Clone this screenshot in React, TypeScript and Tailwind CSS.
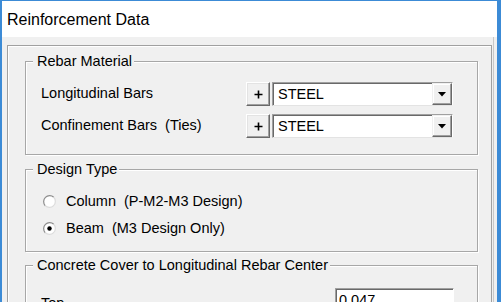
import React from "react"

const ui = "font-['Liberation_Sans',Arial,sans-serif] text-[14.5px] text-black"

function PlusButton() {
  return (
    <div className="w-[24px] h-[24px] flex items-center justify-center bg-[#f0f0f0] border border-t-white border-l-white border-r-[#696969] border-b-[#696969] shadow-[inset_-1px_-1px_0_#a0a0a0,inset_1px_1px_0_#e3e3e3]">
      <svg width="9" height="9" viewBox="0 0 9 9">
        <path d="M4.5 0.5v8M0.5 4.5h8" stroke="#000" strokeWidth="1.6" />
      </svg>
    </div>
  )
}

function Combo({ value }: { value: string }) {
  return (
    <div className="w-[181px] h-[24px] flex bg-white border border-t-[#a0a0a0] border-l-[#a0a0a0] border-r-white border-b-[#e3e3e3] shadow-[inset_1px_1px_0_#696969]">
      <span className="flex-1 pl-[5px] pt-[1px] leading-[21px]">{value}</span>
      <div className="w-[20px] h-full flex items-center justify-center bg-[#f0f0f0] border border-t-[#f0f0f0] border-l-[#f0f0f0] border-r-[#696969] border-b-[#696969] shadow-[inset_-1px_-1px_0_#a0a0a0,inset_1px_1px_0_#fff]">
        <svg width="8" height="5" viewBox="0 0 8 5">
          <path d="M0 0h8L4 4.5z" fill="#000" />
        </svg>
      </div>
    </div>
  )
}

function Radio({ label, checked }: { label: string; checked?: boolean }) {
  return (
    <div className="h-[20px] flex items-center pl-[17px]">
      <svg width="13" height="13" viewBox="0 0 13 13" className="shrink-0">
        <circle cx="6.5" cy="6.5" r="6" fill="#fff" />
        <path d="M2.26 10.74A6 6 0 0 1 10.74 2.26" fill="none" stroke="#8c8c8c" strokeWidth="1.2" />
        <path d="M10.74 2.26A6 6 0 0 1 2.26 10.74" fill="none" stroke="#dcdcdc" strokeWidth="1.2" />
        {checked && <circle cx="6.5" cy="6.5" r="2.2" fill="#000" />}
      </svg>
      <span className="ml-[10px] whitespace-pre leading-[18px]">{label}</span>
    </div>
  )
}

function Group({ title, className, children }: { title: string; className: string; children: React.ReactNode }) {
  return (
    <fieldset className={`ml-[17px] w-[453px] border border-[#a7a7a7] shadow-[inset_1px_1px_0_#fff,1px_1px_0_#fff] ${className}`}>
      <legend className="ml-[7px] pl-[4px] pr-[2px] leading-[16px] bg-[#f0f0f0]">{title}</legend>
      {children}
    </fieldset>
  )
}

export default function App() {
  return (
    <div className={`w-[501px] h-[302px] overflow-hidden flex flex-col border-l-2 border-r-4 border-t border-[#3c8bd6] ${ui}`}>
      {/* Title bar */}
      <div className="h-[36px] shrink-0 bg-white pl-[5px] pt-[9px]">
        <span className="text-[16px] leading-[18px]">Reinforcement Data</span>
      </div>

      <div className="flex-1 flex bg-[#f0f0f0]">
        <div className="flex-1 mr-[3px] border-r border-[#c8c8c8] flex flex-col">
          <div className="flex-1 ml-[5px] mt-[8px] mr-[1px] border-l border-t border-r border-[#a0a0a0] shadow-[inset_1px_1px_0_#fff]">
            {/* Rebar Material */}
            <Group title="Rebar Material" className="mt-[7px] pt-[13px] pb-[16px]">
              <div className="flex flex-col gap-[8px]">
                <div className="flex items-center pl-[15px]">
                  <span className="w-[205px]">Longitudinal Bars</span>
                  <PlusButton />
                  <div className="ml-[2px]">
                    <Combo value="STEEL" />
                  </div>
                </div>
                <div className="flex items-center pl-[15px]">
                  <span className="w-[205px] whitespace-pre">Confinement Bars  (Ties)</span>
                  <PlusButton />
                  <div className="ml-[2px]">
                    <Combo value="STEEL" />
                  </div>
                </div>
              </div>
            </Group>

            {/* Design Type */}
            <Group title="Design Type" className="mt-[6px] pt-[14px] pb-[13px]">
              <div className="flex flex-col gap-[7px]">
                <Radio label="Column  (P-M2-M3 Design)" />
                <Radio label="Beam  (M3 Design Only)" checked />
              </div>
            </Group>

            {/* Concrete Cover */}
            <Group title="Concrete Cover to Longitudinal Rebar Center" className="mt-[5px] pt-[12px] pb-[12px]">
              <div className="flex items-center pl-[15px]">
                <span className="w-[294px] pt-[8px]">Top</span>
                <div className="w-[119px] h-[24px] bg-white border border-t-[#a0a0a0] border-l-[#a0a0a0] border-r-white border-b-[#e3e3e3] shadow-[inset_1px_1px_0_#696969] pl-[3px] pt-[1px] leading-[21px]">
                  0.047
                </div>
              </div>
            </Group>
          </div>
        </div>
      </div>
    </div>
  )
}
